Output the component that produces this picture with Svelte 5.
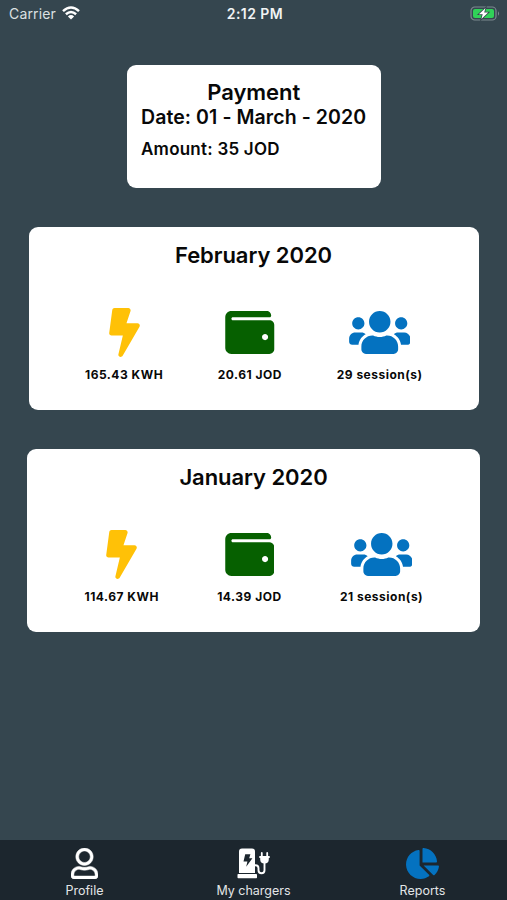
<script>
  const bolt = 'M296 160H180.6l42.6-129.8C227.2 15 215.7 0 200 0H56C44 0 33.8 8.9 32.2 20.8l-32 240C-1.7 275.2 9.5 288 24 288h118.7L96.6 482.5c-3.6 15.2 8 29.5 23.3 29.5 8.4 0 16.4-4.4 20.8-12l176-304c9.3-15.9-2.2-36-20.7-36z';
  const wallet = 'M461.2 128H80c-8.84 0-16-7.16-16-16s7.16-16 16-16h384c8.84 0 16-7.16 16-16 0-26.51-21.49-48-48-48H64C28.65 32 0 60.65 0 96v320c0 35.35 28.65 64 64 64h397.2c28.02 0 50.8-21.53 50.8-48V176c0-26.47-22.78-48-50.8-48zM416 336c-17.67 0-32-14.33-32-32s14.33-32 32-32 32 14.33 32 32-14.33 32-32 32z';
  const users = 'M96 224c35.3 0 64-28.7 64-64s-28.7-64-64-64-64 28.7-64 64 28.7 64 64 64zm448 0c35.3 0 64-28.7 64-64s-28.7-64-64-64-64 28.7-64 64 28.7 64 64 64zm32 32h-64c-17.6 0-33.5 7.1-45.1 18.6 40.3 22.1 68.9 62 75.1 109.4h66c17.7 0 32-14.3 32-32v-32c0-35.3-28.7-64-64-64zm-256 0c61.9 0 112-50.1 112-112S381.9 32 320 32 208 82.1 208 144s50.1 112 112 112zm76.8 32h-8.3c-20.8 10-43.9 16-68.5 16s-47.6-6-68.5-16h-8.3C179.6 288 128 339.6 128 403.2V432c0 26.5 21.5 48 48 48h288c26.5 0 48-21.5 48-48v-28.8c0-63.6-51.6-115.2-115.2-115.2zm-223.7-13.4C161.5 263.1 145.6 256 128 256H64c-35.3 0-64 28.7-64 64v32c0 17.7 14.3 32 32 32h65.9c6.3-47.4 34.9-87.3 75.2-109.4z';
  const months = [
    { id: 'feb', name: 'February 2020', kwh: '165.43 KWH', jod: '20.61 JOD', sessions: '29 session(s)' },
    { id: 'jan', name: 'January 2020', kwh: '114.67 KWH', jod: '14.39 JOD', sessions: '21 session(s)' }
  ];
</script>

<div class="screen">
  <header class="status">
    <div class="carrier">
      <span>Carrier</span>
      <svg width="18" height="14" viewBox="0 0 18 14" fill="none" stroke="#fff" stroke-width="2.5">
        <path d="M1 5.1Q9-2.2 17 5.1M3.9 8.2Q9 3.7 14.1 8.2" />
        <path d="M9 13.6L5.9 10.4Q9 7.8 12.1 10.4Z" fill="#fff" stroke="none" />
      </svg>
    </div>
    <span class="time">2:12 PM</span>
    <div class="battery">
      <svg width="31" height="15" viewBox="0 0 31 15">
        <rect x="1" y="1" width="25" height="13" rx="3.8" fill="none" stroke="#7c8990" stroke-width="1.2" />
        <path d="M28 5.2q2.2 2.3 0 4.6z" fill="#7c8990" />
        <rect x="3" y="3" width="21" height="9" rx="2" fill="#30d158" />
        <path d="M15.5 2L8.9 8.3h3.8L11.4 13l6.8-6.5h-4z" fill="#fff" stroke="#35444d" stroke-width="1.6" paint-order="stroke" />
      </svg>
    </div>
  </header>

  <main>
    <section class="payment">
      <h2>Payment</h2>
      <p class="date">Date: 01 - March - 2020</p>
      <p class="amount">Amount: 35 JOD</p>
    </section>

    {#each months as m}
      <section class="month {m.id}">
        <h2>{m.name}</h2>
        <div class="stats">
          <div class="stat kwh">
            <svg width="31" height="49" viewBox="0 0 320 512" fill="#ffc107"><path d={bolt} /></svg>
            <span>{m.kwh}</span>
          </div>
          <div class="stat jod">
            <svg width="49.5" height="49.5" viewBox="0 0 512 512" fill="#066000"><path d={wallet} /></svg>
            <span>{m.jod}</span>
          </div>
          <div class="stat sessions">
            <svg width="61.5" height="49" viewBox="0 0 640 512" fill="#0472c0"><path d={users} /></svg>
            <span>{m.sessions}</span>
          </div>
        </div>
      </section>
    {/each}
  </main>

  <nav>
    <div class="tab">
      <svg width="27" height="31" viewBox="0 0 448 512" fill="#fff"><path stroke="#fff" stroke-width="8" d="M313.6 304c-28.7 0-42.5 16-89.6 16-47.1 0-60.8-16-89.6-16C60.2 304 0 364.2 0 438.4V464c0 26.5 21.5 48 48 48h352c26.5 0 48-21.5 48-48v-25.6c0-74.2-60.2-134.4-134.4-134.4zM400 464H48v-25.6c0-47.6 38.8-86.4 86.4-86.4 14.6 0 38.3 16 89.6 16 51.7 0 74.9-16 89.6-16 47.6 0 86.4 38.8 86.4 86.4V464zM224 288c79.5 0 144-64.5 144-144S303.5 0 224 0 80 64.5 80 144s64.5 144 144 144zm0-240c52.9 0 96 43.1 96 96s-43.1 96-96 96-96-43.1-96-96 43.1-96 96-96z" /></svg>
      <span>Profile</span>
    </div>
    <div class="tab chargers">
      <svg width="34" height="31" viewBox="0 0 34 31">
        <path d="M2 25V3.5Q2 .5 5 .5h10q3 0 3 3V25z" fill="#fff" />
        <rect x=".5" y="26" width="19.5" height="4.2" rx=".7" fill="#fff" />
        <path d="M8.2 6.2h5.2l-1.2 4h3.2L9.2 18.8l1.2-5.3H6.5z" fill="#1c262e" />
        <path d="M18 17.2h.5q3 0 3 3v2q0 3 3 3t3-3V14" fill="none" stroke="#fff" stroke-width="1.9" />
        <path d="M24.8 9V5M30.2 9V5" stroke="#fff" stroke-width="1.8" stroke-linecap="round" />
        <path d="M22.3 8h10.4v2h-.9v1.2q0 4.3-4.3 4.3t-4.3-4.3V10h-.9z" fill="#fff" />
      </svg>
      <span>My chargers</span>
    </div>
    <div class="tab">
      <svg width="33" height="31" viewBox="0 0 544 512" fill="#0472c0"><path d="M527.79 288H290.5l158.03 158.03c6.04 6.04 15.98 6.53 22.19.68 38.7-36.46 65.32-85.61 73.13-140.86 1.34-9.46-6.51-17.85-16.06-17.85zm-15.83-64.8C503.72 103.74 408.26 8.28 288.8.04 279.68-.59 272 7.1 272 16.24V240h223.77c9.14 0 16.82-7.68 16.19-16.8zM224 288V50.71c0-9.55-8.39-17.4-17.84-16.06C86.99 51.49-4.1 155.6.14 280.37 4.5 408.51 114.83 513.59 243.03 511.98c50.4-.63 96.97-16.87 135.26-44.03 7.9-5.6 8.42-17.23 1.57-24.08L224 288z" /></svg>
      <span>Reports</span>
    </div>
  </nav>
</div>

<style>
  .screen {
    width: 507px;
    height: 900px;
    display: flex;
    flex-direction: column;
    overflow: hidden;
    background: #35464f;
    font-family: Inter, sans-serif;
    white-space: nowrap;
  }
  svg { display: block; flex: none; }
  h2, p { margin: 0; }
  .status {
    display: grid;
    grid-template-columns: 1fr auto 1fr;
    height: 28px;
    align-items: center;
    box-sizing: border-box;
    padding: 0 6px 2px 9px;
    color: #f1f3f4;
    font-size: 14px;
  }
  .carrier { display: flex; align-items: center; gap: 6px; color: #dce0e2; }
  .carrier span { letter-spacing: 0.15px; }
  .time { font-weight: 600; font-size: 14px; letter-spacing: 0.45px; }
  .battery { display: flex; justify-content: flex-end; }
  main {
    flex: 1;
    display: flex;
    flex-direction: column;
    align-items: center;
    padding-top: 37px;
  }
  section {
    box-sizing: border-box;
    background: #fff;
    border-radius: 9px;
    color: #080808;
  }
  h2 { font-size: 22px; line-height: 27px; font-weight: 600; text-align: center; letter-spacing: -0.06px; }
  .payment { width: 254px; height: 123px; padding: 14px 14px 0 14.5px; }
  .date { font-size: 19.5px; line-height: 23px; font-weight: 600; letter-spacing: 0.08px; }
  .amount { margin-top: 10px; font-size: 17px; line-height: 21px; font-weight: 600; letter-spacing: 0.23px; }
  .month { height: 183px; padding-top: 15px; margin-top: 39px; }
  .feb { width: 450px; }
  .jan { width: 453px; }
  .stats { display: flex; margin-top: 39px; }
  .feb .stats { padding-left: 56.5px; gap: 54.7px; }
  .jan .stats { padding-left: 57.5px; gap: 58.3px; }
  .stat { display: flex; flex-direction: column; align-items: center; height: 74px; }
  .stat svg { height: 49px; }
  .stat span {
    margin-top: 10px;
    font-size: 12px;
    line-height: 16px;
    font-weight: 700;
    letter-spacing: 0.5px;
  }
  nav {
    height: 60px;
    display: grid;
    grid-template-columns: repeat(3, 1fr);
    background: #1c262e;
    color: #e3e5e7;
  }
  .tab { display: flex; flex-direction: column; align-items: center; padding-top: 8px; }
  .tab span { margin-top: 4px; font-size: 12.5px; line-height: 16px; letter-spacing: 0; }
</style>
